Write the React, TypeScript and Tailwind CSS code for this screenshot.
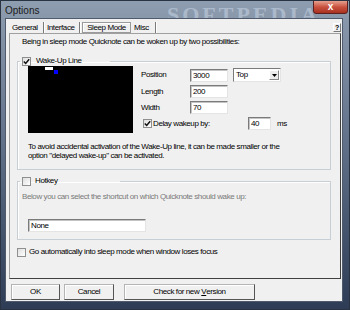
import React from "react";

function Check({ checked }: { checked?: boolean }) {
  return (
    <span className="w-[9px] h-[9px] shrink-0 border border-[#8e8f8f] bg-gradient-to-br from-[#dedede] to-white flex items-center justify-center">
      {checked && (
        <svg width="7" height="7" viewBox="0 0 7 7">
          <path d="M0.8 3.4 L2.7 5.4 L6.2 1.2" stroke="#111" strokeWidth="1.5" fill="none" />
        </svg>
      )}
    </span>
  );
}

function Field({ value, w }: { value: string; w: string }) {
  return (
    <div className={`${w} h-[13px] bg-white border border-t-[#7a7a7a] border-l-[#7a7a7a] border-b-[#e4e4e4] border-r-[#e4e4e4] shadow-[inset_1px_1px_0_#c4c4c4] pl-[2px] leading-[11px]`}>
      {value}
    </div>
  );
}

function Btn({ children, w }: { children: React.ReactNode; w: string }) {
  return (
    <div className={`${w} h-[16px] flex items-center justify-center bg-[#f0f0f0] border border-[#b4b4b4] border-b-[#555] border-r-[#555] shadow-[inset_1px_1px_0_#fff]`}>
      {children}
    </div>
  );
}

export default function App() {
  const tabs = ["General", "Interface", "Sleep Mode", "Misc"];
  return (
    <div className="w-[350px] h-[310px] flex flex-col bg-gradient-to-b from-[#8f9db0] via-[#5d6d86] to-[#2e3c55] border border-[#2a3342] font-['Liberation_Sans',Arial,sans-serif] text-[8px] tracking-[-0.4px] text-black overflow-hidden relative">
      {/* title bar */}
      <div className="h-[17px] flex justify-between relative">
        <span className="ml-[4px] mt-[4px] text-[10px] leading-[11px] tracking-normal text-[#1a1a1a]">Options</span>
        <span className="absolute left-[166px] top-[-3px] text-[22px] font-bold tracking-[3px] text-[#dce9f8] opacity-40 font-['Liberation_Serif',serif]">
          SOFTPEDIA
        </span>
        <div className="w-[35px] h-[14px] mt-[-1px] mr-[1px] rounded-b-[3px] border border-[#5b2020] bg-gradient-to-b from-[#e6a08f] via-[#c8513f] to-[#a8301f] flex items-center justify-center text-white text-[10px] font-bold leading-none tracking-normal">
          x
        </div>
      </div>

      {/* client */}
      <div className="ml-[4px] mr-[6px] h-[284px] bg-[#f0f0f0] border border-[#4f5b6c] flex flex-col relative">
        {/* tabs */}
        <div className="mt-[3px] ml-[3px] mr-[1px] h-[11px] flex items-stretch">
          {tabs.map((t) =>
            t === "Sleep Mode" ? (
              <div key={t} className="w-[49px] ml-[2px] border border-[#9a9a9a] shadow-[inset_1px_1px_0_#fff] flex items-center justify-center leading-none">
                {t}
              </div>
            ) : (
              <div key={t} className={`${t === "General" ? "w-[35px] pl-[3px]" : t === "Interface" ? "w-[36px] pl-[3px]" : "w-[25px] pl-[3px]"} border-r border-[#7a7a7a] shadow-[1px_0_0_#fff] flex items-center leading-none`}>
                {t}
              </div>
            )
          )}
          <div className="flex-1" />
          <div className="w-[8px] h-[9px] mt-[1px] border border-[#fff] border-b-[#777] border-r-[#777] flex items-center justify-center text-[7px] font-bold leading-none">
            ?
          </div>
        </div>

        {/* panel */}
        <div className="ml-[3px] w-[332px] h-[246px] border border-[#a0a0a0] border-b-[#404040] border-r-[#404040] flex flex-col">
          <p className="mt-[3px] ml-[12px] leading-[10px]">
            Being in sleep mode Quicknote can be woken up by two possibilities:
          </p>

          {/* wake-up line group */}
          <fieldset className="mt-[9px] ml-[7px] w-[314px] border border-[#c8cfd4] shadow-[inset_1px_1px_0_#fff] px-[2px] pb-[9px]">
            <legend className="w-[90px] h-[10px] flex items-center gap-[5px] pl-[2px]">
              <Check checked />
              <span className="leading-[10px]">Wake-Up Line</span>
            </legend>
            <div className="pl-[8px] flex">
              <div className="w-[105px] h-[67px] bg-black relative">
                <div className="absolute left-[17px] top-[1px] w-[8px] h-[3px] bg-white" />
                <div className="absolute left-[26px] top-[4px] w-[4px] h-[4px] bg-[#0000ff]" />
              </div>
              <div className="ml-[8px] mt-[2px] flex flex-col gap-[3px]">
                <div className="flex items-center h-[14px]">
                  <span className="w-[49px]">Position</span>
                  <Field value="3000" w="w-[38px]" />
                  <div className="ml-[5px] w-[48px] h-[14px] bg-white border border-t-[#7a7a7a] border-l-[#7a7a7a] border-b-[#e4e4e4] border-r-[#e4e4e4] flex items-center justify-between">
                    <span className="pl-[2px]">Top</span>
                    <span className="w-[10px] h-[10px] mr-[1px] bg-[#ececec] border border-[#fff] border-b-[#888] border-r-[#888] flex items-center justify-center">
                      <svg width="5" height="3" viewBox="0 0 5 3">
                        <path d="M0 0 H5 L2.5 3 Z" fill="#000" />
                      </svg>
                    </span>
                  </div>
                </div>
                <div className="flex items-center h-[13px]">
                  <span className="w-[49px]">Length</span>
                  <Field value="200" w="w-[38px]" />
                </div>
                <div className="flex items-center h-[13px]">
                  <span className="w-[49px]">Width</span>
                  <Field value="70" w="w-[38px]" />
                </div>
                <div className="flex items-center h-[13px]">
                  <span className="ml-[2px]">
                    <Check checked />
                  </span>
                  <span className="ml-[1px] w-[95px]">Delay wakeup by:</span>
                  <Field value="40" w="w-[23px]" />
                  <span className="ml-[6px]">ms</span>
                </div>
              </div>
            </div>
            <p className="mt-[9px] pl-[8px] leading-[9px]">
              To avoid accidental activation of the Wake-Up line, it can be made smaller or the
              <br />
              option "delayed wake-up" can be activated.
            </p>
          </fieldset>

          {/* hotkey group */}
          <fieldset className="mt-[6px] ml-[7px] w-[314px] border border-[#c8cfd4] shadow-[inset_1px_1px_0_#fff] px-[2px] pb-[7px]">
            <legend className="w-[100px] h-[10px] flex items-center gap-[4px] pl-[2px]">
              <Check />
              <span className="leading-[10px]">Hotkey</span>
            </legend>
            <p className="mt-[6px] pl-[2px] leading-[10px] text-[#7a7a7a]">
              Below you can select the shortcut on which Quicknote should wake up:
            </p>
            <div className="mt-[17px] pl-[8px]">
              <Field value="None" w="w-[118px]" />
            </div>
          </fieldset>

          <div className="mt-[7px] ml-[7px] flex items-center gap-[3px]">
            <Check />
            <span className="leading-[10px]">Go automatically into sleep mode when window loses focus</span>
          </div>
        </div>

        {/* buttons */}
        <div className="mt-[5px] ml-[5px] flex">
          <Btn w="w-[49px]">OK</Btn>
          <div className="ml-[4px]">
            <Btn w="w-[50px]">Cancel</Btn>
          </div>
          <div className="ml-[10px]">
            <Btn w="w-[131px]">
              Check for new <span className="underline ml-[2px]">V</span>ersion
            </Btn>
          </div>
        </div>
      </div>
    </div>
  );
}
